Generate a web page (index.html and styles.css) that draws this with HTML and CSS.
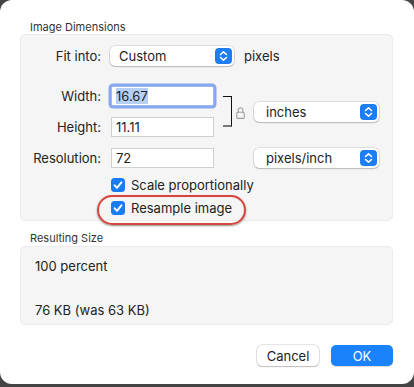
FILE: index.html
```html
<!DOCTYPE html>
<html lang="en">
<head>
    <meta charset="UTF-8">
    <title>Image Dimensions</title>
    <link rel="stylesheet" href="styles.css">
</head>
<body>
    <div class="dialog">
        <div class="section-title">Image Dimensions</div>
        <div class="group dims-group">
            <div class="row fit-row">
                <span class="label">Fit into:</span>
                <div class="popup popup-fit">
                    <span>Custom</span>
                    <svg class="stepper" width="17" height="16" viewBox="0 0 17 16"><rect width="17" height="16" rx="4" fill="#1c7df4"/><path d="M5.5 6.5 L8.5 3.8 L11.5 6.5 M5.5 9.5 L8.5 12.2 L11.5 9.5" stroke="#fff" stroke-width="1.6" fill="none" stroke-linecap="round" stroke-linejoin="round"/></svg>
                </div>
                <span class="unit-text">pixels</span>
            </div>

            <div class="size-block">
                <div class="size-fields">
                    <div class="row">
                        <span class="label">Width:</span>
                        <div class="field focused"><span class="selected">16.67</span></div>
                    </div>
                    <div class="row height-row">
                        <span class="label">Height:</span>
                        <div class="field">11.11</div>
                    </div>
                </div>
                <div class="bracket"></div>
                <svg class="lock" width="9" height="13" viewBox="0 0 9 13"><path d="M2.2 6.2 V4 A2.3 2.3 0 0 1 6.8 4 V6.2" stroke="#a0a0a0" stroke-width="1.1" fill="none"/><rect x="0.8" y="6.2" width="7.4" height="6.2" rx="1" stroke="#a0a0a0" stroke-width="1.1" fill="none"/></svg>
                <div class="popup popup-unit">
                    <span>inches</span>
                    <svg class="stepper" width="17" height="16" viewBox="0 0 17 16"><rect width="17" height="16" rx="4" fill="#1c7df4"/><path d="M5.5 6.5 L8.5 3.8 L11.5 6.5 M5.5 9.5 L8.5 12.2 L11.5 9.5" stroke="#fff" stroke-width="1.6" fill="none" stroke-linecap="round" stroke-linejoin="round"/></svg>
                </div>
            </div>

            <div class="row res-row">
                <span class="label">Resolution:</span>
                <div class="field">72</div>
                <div class="popup popup-unit res-popup">
                    <span>pixels/inch</span>
                    <svg class="stepper" width="17" height="16" viewBox="0 0 17 16"><rect width="17" height="16" rx="4" fill="#1c7df4"/><path d="M5.5 6.5 L8.5 3.8 L11.5 6.5 M5.5 9.5 L8.5 12.2 L11.5 9.5" stroke="#fff" stroke-width="1.6" fill="none" stroke-linecap="round" stroke-linejoin="round"/></svg>
                </div>
            </div>

            <div class="check scale-check">
                <svg class="box" width="14" height="14" viewBox="0 0 14 14"><rect width="14" height="14" rx="3.5" fill="#1a7cf5"/><path d="M3.6 7.3 L6 9.8 L10.4 4.3" stroke="#fff" stroke-width="1.9" fill="none" stroke-linecap="round" stroke-linejoin="round"/></svg>
                <span>Scale proportionally</span>
            </div>
            <div class="check resample-check">
                <svg class="box" width="14" height="14" viewBox="0 0 14 14"><rect width="14" height="14" rx="3.5" fill="#1a7cf5"/><path d="M3.6 7.3 L6 9.8 L10.4 4.3" stroke="#fff" stroke-width="1.9" fill="none" stroke-linecap="round" stroke-linejoin="round"/></svg>
                <span>Resample image</span>
            </div>
        </div>

        <div class="section-title result-title">Resulting Size</div>
        <div class="group result-group">
            <p>100 percent</p>
            <p class="size-line">76 KB (was 63 KB)</p>
        </div>

        <div class="buttons">
            <button class="btn">Cancel</button>
            <button class="btn btn-primary">OK</button>
        </div>
    </div>
</body>
</html>
```

FILE: styles.css
```css
body {
    margin: 0;
    background: #444;
    font-family: Inter, 'Noto Sans', sans-serif;
    font-size: 13px;
    color: #222;
    height: 387px;
    overflow: hidden;
}

.dialog {
    width: 414px;
    height: 384px;
    box-sizing: border-box;
    background: #fff;
    border-radius: 12px;
    padding: 20px 21px 0 20px;
}

.section-title {
    font-size: 11px;
    line-height: 14px;
    height: 14px;
    padding-left: 10px;
    color: #333;
}

.result-title {
    margin-top: 10px;
    margin-bottom: 1px;
}

.group {
    background: #f5f5f5;
    border: 1px solid #ebebeb;
    border-radius: 5px;
    box-sizing: border-box;
}

.dims-group {
    height: 187px;
    padding-top: 11px;
}

.row {
    display: flex;
    align-items: center;
    height: 20px;
}

.label {
    width: 80px;
    margin-right: 10px;
    text-align: right;
    flex-shrink: 0;
}

.popup {
    display: flex;
    align-items: center;
    justify-content: space-between;
    height: 20px;
    box-sizing: border-box;
    background: #fff;
    border-radius: 5px;
    padding: 0 2px 0 9px;
    box-shadow: 0 0 0 0.5px rgba(0,0,0,0.18), 0 1px 1.5px rgba(0,0,0,0.18);
}

.popup-fit {
    width: 124px;
    margin-left: -1px;
}

.unit-text {
    margin-left: 10px;
}

.popup-unit {
    width: 125px;
    margin-left: 9px;
    padding-left: 12px;
}

.res-popup {
    margin-left: 40px;
}

.field {
    width: 103px;
    height: 20px;
    box-sizing: border-box;
    background: #fff;
    border: 1px solid #cfcfcf;
    padding-left: 4px;
    line-height: 18px;
}

.field.focused {
    border-color: #9fb9ee;
    box-shadow: 0 0 0 2.5px #87a8f0;
    border-radius: 2px;
}

.selected {
    background: #b5cff7;
}

.size-block {
    display: flex;
    align-items: center;
    margin-top: 20px;
}

.height-row {
    margin-top: 11px;
}

.bracket {
    width: 9px;
    height: 31px;
    box-sizing: border-box;
    margin-left: 9px;
    border-top: 1.5px solid #111;
    border-right: 1.5px solid #111;
    border-bottom: 2px solid #777;
}

.lock {
    margin-left: 4px;
    margin-top: 2px;
}

.res-row {
    margin-top: 11px;
}

.check {
    display: flex;
    align-items: center;
    height: 16px;
    margin-left: 90px;
}

.check .box {
    margin-right: 6px;
}

.scale-check {
    margin-top: 9px;
}

.resample-check {
    margin-top: 7px;
    width: max-content;
    position: relative;
}

.resample-check::after {
    content: "";
    position: absolute;
    left: -14px;
    right: -14px;
    top: -5px;
    bottom: -9px;
    border: 2px solid #d7463e;
    border-radius: 16px;
    box-shadow: 0 1px 2px rgba(0,0,0,0.45), inset 0 0 1px rgba(0,0,0,0.2);
}

.result-group {
    height: 79px;
    padding: 11px 0 0 14px;
}

.result-group p {
    margin: 0;
    line-height: 16px;
}

.result-group .size-line {
    margin-top: 28px;
}

.buttons {
    display: flex;
    justify-content: flex-end;
    gap: 12px;
    margin-top: 20px;
}

.btn {
    width: 62px;
    height: 21px;
    font-family: Inter, 'Noto Sans', sans-serif;
    font-size: 13px;
    color: #222;
    background: #fff;
    border: none;
    border-radius: 5px;
    box-shadow: 0 0 0 0.5px rgba(0,0,0,0.2), 0 1px 1.5px rgba(0,0,0,0.18);
    padding: 0;
}

.btn-primary {
    background: #1a82fb;
    color: #fff;
    box-shadow: 0 1px 1px rgba(0,0,0,0.15);
}
```
